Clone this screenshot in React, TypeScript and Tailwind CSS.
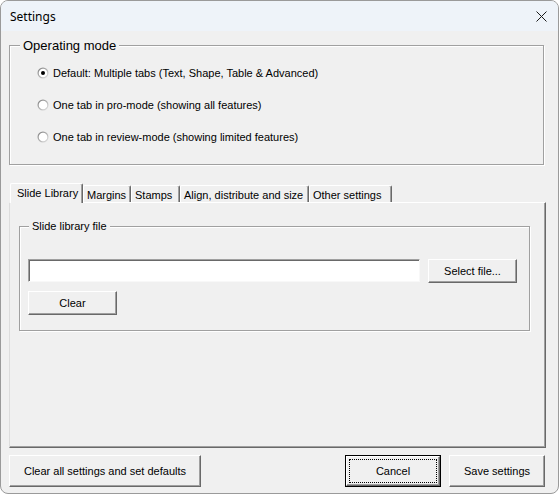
import React from "react";

const font = { fontFamily: '"Liberation Sans", Arial, sans-serif' };

function Radio({ checked }: { checked?: boolean }) {
  const id = checked ? "rg1" : "rg0";
  return (
    <svg width="12" height="12" viewBox="0 0 12 12" className="shrink-0">
      <defs>
        <linearGradient id={id} x1="0" y1="0" x2="1" y2="1">
          <stop offset="0" stopColor="#7a7a7a" />
          <stop offset="1" stopColor="#e8e8e8" />
        </linearGradient>
      </defs>
      <circle cx="6" cy="6" r="5.5" fill={`url(#${id})`} />
      <circle cx="6" cy="6" r="4.3" fill="#ffffff" />
      {checked && <circle cx="6" cy="6" r="2" fill="#000000" />}
    </svg>
  );
}

function Btn({ children, className }: { children: React.ReactNode; className: string }) {
  return (
    <div
      className={`flex items-center justify-center bg-[#f0f0f0] border-t border-l border-t-white border-l-white border-b border-r border-b-[#696969] border-r-[#696969] shadow-[inset_-1px_-1px_0_#a0a0a0] text-[11px] text-black ${className}`}
    >
      {children}
    </div>
  );
}

export default function App() {
  const tabs = [
    { label: "Margins", w: "w-[48px]" },
    { label: "Stamps", w: "w-[49px]" },
    { label: "Align, distribute and size", w: "w-[129px]" },
    { label: "Other settings", w: "w-[83px]" },
  ];
  return (
    <div style={font} className="w-[559px] h-[494px] bg-[#f0f0f0] border border-[#9a9a9a] rounded-[8px] overflow-hidden flex flex-col text-black">
      {/* Title bar */}
      <div className="h-[30px] shrink-0 bg-[#eef3f9] flex items-center justify-between pl-[9px] pr-[10px]">
        <span className="text-[12px] mt-[1px]" style={{ fontFamily: '"Noto Sans", "Liberation Sans", sans-serif' }}>
          Settings
        </span>
        <svg width="11" height="11" viewBox="0 0 11 11" className="mr-[1px]">
          <path d="M0.5 0.5 L10.5 10.5 M10.5 0.5 L0.5 10.5" stroke="#1a1a1a" strokeWidth="1" />
        </svg>
      </div>

      <div className="flex flex-col pl-[8px]">
        {/* Operating mode */}
        <div className="mt-[14px] w-[535px] h-[120px] border border-[#a0a0a0] shadow-[inset_1px_1px_0_#fff,1px_1px_0_#fff] flex flex-col">
          <span className="-mt-[8px] ml-[10px] px-[3px] w-fit bg-[#f0f0f0] text-[13px] leading-[16px]">
            Operating mode
          </span>
          <div className="flex flex-col pl-[27px] pt-[12px] gap-[18px] text-[11px] leading-[14px]">
            <div className="flex items-center gap-[4px] h-[14px]">
              <Radio checked />
              <span>Default: Multiple tabs (Text, Shape, Table &amp; Advanced)</span>
            </div>
            <div className="flex items-center gap-[4px] h-[14px]">
              <Radio />
              <span>One tab in pro-mode (showing all features)</span>
            </div>
            <div className="flex items-center gap-[4px] h-[14px]">
              <Radio />
              <span>One tab in review-mode (showing limited features)</span>
            </div>
          </div>
        </div>

        {/* Tabs */}
        <div className="mt-[18px] h-[19px] flex items-end pl-[1px] text-[11px]">
          <div className="relative z-10 -mb-px h-[20px] w-[73px] bg-[#f0f0f0] border-t border-l border-t-white border-l-white border-r border-r-[#696969] shadow-[inset_-1px_0_0_#a0a0a0] rounded-t-[2px] pl-[6px] pt-[2px] leading-[14px]">
            Slide Library
          </div>
          {tabs.map((t) => (
            <div
              key={t.label}
              className={`h-[17px] ${t.w} bg-[#f0f0f0] border-t border-l border-t-white border-l-white border-r border-r-[#696969] shadow-[inset_-1px_0_0_#a0a0a0] rounded-t-[2px] pl-[3px] pt-[2px] leading-[14px] whitespace-nowrap`}
            >
              {t.label}
            </div>
          ))}
        </div>

        {/* Tab panel */}
        <div className="w-[537px] h-[246px] border-t border-l border-t-white border-l-[#dcdcdc] border-r border-b border-r-[#696969] border-b-[#696969] shadow-[inset_-1px_-1px_0_#a0a0a0] flex flex-col">
          <div className="mt-[23px] ml-[9px] w-[511px] h-[105px] border border-[#a0a0a0] shadow-[inset_1px_1px_0_#fff,1px_1px_0_#fff] flex flex-col text-[11px]">
            <span className="-mt-[7px] ml-[9px] px-[3px] w-fit bg-[#f0f0f0] leading-[13px]">Slide library file</span>
            <div className="mt-[26px] pl-[8px] flex items-start">
              <div className="w-[392px] h-[23px] bg-white border-t border-l border-t-[#a0a0a0] border-l-[#a0a0a0] border-b border-r border-b-[#f8f8f8] border-r-[#f8f8f8] shadow-[inset_1px_1px_0_#696969]" />
              <Btn className="ml-[8px] w-[89px] h-[24px]">Select file...</Btn>
            </div>
            <div className="mt-[8px] pl-[8px]">
              <Btn className="w-[89px] h-[24px]">Clear</Btn>
            </div>
          </div>
        </div>

        {/* Bottom buttons */}
        <div className="mt-[7px] flex items-start">
          <Btn className="w-[192px] h-[32px]">Clear all settings and set defaults</Btn>
          <div className="ml-[144px] w-[96px] h-[32px] border border-black flex">
            <div className="flex-1 flex p-[2px] bg-[#f0f0f0] border-t border-l border-t-white border-l-white border-b border-r border-b-[#696969] border-r-[#696969] shadow-[inset_-1px_-1px_0_#a0a0a0]">
              <div className="flex-1 flex items-center justify-center border border-dotted border-black text-[11px]">
                Cancel
              </div>
            </div>
          </div>
          <Btn className="ml-[8px] w-[96px] h-[32px]">Save settings</Btn>
        </div>
      </div>
    </div>
  );
}
